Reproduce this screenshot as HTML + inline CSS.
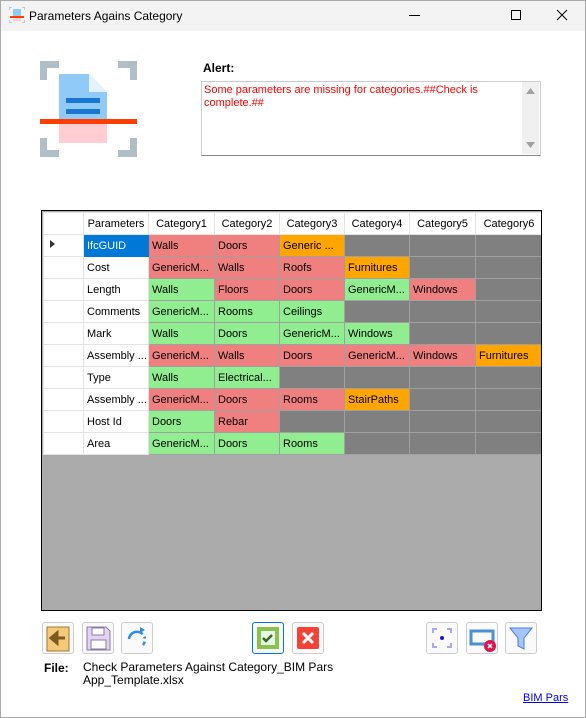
<!DOCTYPE html>
<html><head><style>
*{margin:0;padding:0;box-sizing:border-box}
body{width:586px;height:718px;background:#fff;font-family:"Liberation Sans",sans-serif;font-size:11px;position:relative;overflow:hidden}
.abs{position:absolute}
.title{left:0;top:0;width:586px;height:31px;background:#f3f3f3}
.grid{left:41px;top:210px;width:501px;height:401px;border:1px solid #000;background:#ababab;overflow:hidden}
table{border-collapse:collapse;table-layout:fixed;position:absolute;left:1px;top:1px;width:499px}
td{height:22px;border:1px solid #a0a0a0;padding:0 0 0 3px;white-space:nowrap;overflow:hidden;font-size:11px;color:#000}
.h td{background:#fff;border-color:#e3e3e3;text-align:center;padding:0}
td.rh{background:#fff;border-color:#e3e3e3}
td.p{background:#fff;border-color:#e3e3e3}
.R{background:#f08080}.G{background:#90ee90}.O{background:#ffa500}.X{background:#808080}
.btn{position:absolute;top:622px;width:32px;height:32px;border:1px solid #ccc;border-radius:3px;background:#fafafa}
</style></head><body>
<div class="abs title"></div>
<div class="abs" style="left:0;top:0;width:586px;height:718px;border:1px solid #aaa;pointer-events:none"></div>
<svg class="abs" style="left:9px;top:7px" width="16" height="16"><rect x="4" y="2" width="8" height="8" fill="#90caf9"/><rect x="1" y="9" width="14" height="2" fill="#ff3d00"/><rect x="4" y="11" width="8" height="3" fill="#ffcdd2"/><path d="M0 0h3M0 0v3M16 0h-3M16 0v3M0 16h3M0 16v-3M16 16h-3M16 16v-3" stroke="#b0bec5" stroke-width="1.5"/></svg>
<div class="abs" style="left:29px;top:9px;font-size:12px;color:#000">Parameters Agains Category</div>
<div class="abs" style="left:409px;top:15px;width:11px;height:1px;background:#000"></div>
<div class="abs" style="left:511px;top:10px;width:10px;height:10px;border:1px solid #000"></div>
<svg class="abs" style="left:556px;top:9px" width="12" height="12"><path d="M1 1L11 11M11 1L1 11" stroke="#000" stroke-width="1"/></svg>

<svg class="abs" style="left:40px;top:61px" width="97" height="96">
<path d="M0 0h19v7H7v12H0zM97 0H78v7h12v12h7zM0 96h19v-7H7V77H0zM97 96H78v-7h12V77h7z" fill="#b0bec5"/>
<path d="M19 13h30l18 18v32H19z" fill="#90caf9"/><path d="M49 13v18h18z" fill="#e3f2fd"/>
<rect x="26" y="37" width="34" height="5" fill="#1976d2"/><rect x="26" y="48" width="34" height="5" fill="#1976d2"/>
<rect x="19" y="63" width="48" height="19" fill="#ffcdd2"/><rect x="0" y="58" width="97" height="5" fill="#ff3d00"/>
</svg>
<div class="abs" style="left:203px;top:61px;font-weight:bold;font-size:12px">Alert:</div>
<div class="abs" style="left:201px;top:81px;width:340px;height:75px;border:1px solid #ccc;border-bottom-color:#888;background:#fff"></div>
<div class="abs" style="left:204px;top:84px;width:310px;color:#ff0000;line-height:13px">Some parameters are missing for categories.##Check is complete.##</div>
<div class="abs" style="left:522px;top:82px;width:17px;height:72px;background:#f0f0f0"></div>
<svg class="abs" style="left:525px;top:87px" width="11" height="66"><path d="M1 7L5.5 1L10 7z M1 55L5.5 61L10 55z" fill="#a0a0a0"/></svg>

<div class="abs grid">
<table>
<colgroup><col style="width:40px"><col style="width:65px"><col style="width:66px"><col style="width:65px"><col style="width:65px"><col style="width:65px"><col style="width:66px"><col style="width:67px"></colgroup>
<tr class="h"><td></td><td>Parameters</td><td>Category1</td><td>Category2</td><td>Category3</td><td>Category4</td><td>Category5</td><td>Category6</td></tr>
<tr><td class="rh"><svg width="8" height="10" style="margin-left:2px"><path d="M1 1L6 5L1 9z" fill="#333"/></svg></td><td style="background:#0078d7;color:#fff;border-color:#0078d7">IfcGUID</td><td class="R">Walls</td><td class="R">Doors</td><td class="O">Generic ...</td><td class="X"></td><td class="X"></td><td class="X"></td></tr>
<tr><td class="rh"></td><td class="p">Cost</td><td class="R">GenericM...</td><td class="R">Walls</td><td class="R">Roofs</td><td class="O">Furnitures</td><td class="X"></td><td class="X"></td></tr>
<tr><td class="rh"></td><td class="p">Length</td><td class="G">Walls</td><td class="R">Floors</td><td class="R">Doors</td><td class="G">GenericM...</td><td class="R">Windows</td><td class="X"></td></tr>
<tr><td class="rh"></td><td class="p">Comments</td><td class="G">GenericM...</td><td class="G">Rooms</td><td class="G">Ceilings</td><td class="X"></td><td class="X"></td><td class="X"></td></tr>
<tr><td class="rh"></td><td class="p">Mark</td><td class="G">Walls</td><td class="G">Doors</td><td class="G">GenericM...</td><td class="G">Windows</td><td class="X"></td><td class="X"></td></tr>
<tr><td class="rh"></td><td class="p">Assembly ...</td><td class="R">GenericM...</td><td class="R">Walls</td><td class="R">Doors</td><td class="R">GenericM...</td><td class="R">Windows</td><td class="O">Furnitures</td></tr>
<tr><td class="rh"></td><td class="p">Type</td><td class="G">Walls</td><td class="G">Electrical...</td><td class="X"></td><td class="X"></td><td class="X"></td><td class="X"></td></tr>
<tr><td class="rh"></td><td class="p">Assembly ...</td><td class="R">GenericM...</td><td class="R">Doors</td><td class="R">Rooms</td><td class="O">StairPaths</td><td class="X"></td><td class="X"></td></tr>
<tr><td class="rh"></td><td class="p">Host Id</td><td class="G">Doors</td><td class="R">Rebar</td><td class="X"></td><td class="X"></td><td class="X"></td><td class="X"></td></tr>
<tr><td class="rh"></td><td class="p">Area</td><td class="G">GenericM...</td><td class="G">Doors</td><td class="G">Rooms</td><td class="X"></td><td class="X"></td><td class="X"></td></tr>
</table>
</div>

<div class="btn" style="left:42px"><svg width="30" height="30"><rect x="4" y="4" width="22" height="24" fill="#f5c97a" stroke="#a07a30"/><path d="M8 15h14M8 15l6-5v10z" stroke="#7a5a20" stroke-width="3" fill="#7a5a20"/></svg></div>
<div class="btn" style="left:82px"><svg width="30" height="30"><path d="M4 4h19l4 4v19H4z" fill="#e1d5f0" stroke="#8a7aa8"/><rect x="9" y="5" width="12" height="7" fill="#fff" stroke="#8a7aa8"/><rect x="8" y="17" width="15" height="9" fill="#fff" stroke="#8a7aa8"/></svg></div>
<div class="btn" style="left:121px"><svg width="30" height="30"><path d="M7 16a8 8 0 1 1 14 6" stroke="#2a8af0" stroke-width="2.5" fill="none" stroke-dasharray="18 3 2 3"/><path d="M18 4l5 3-5 3z" fill="#2a8af0"/></svg></div>
<div class="btn" style="left:252px;border-color:#0078d7"><svg width="30" height="30"><rect x="4" y="4" width="22" height="22" fill="#8bc34a"/><rect x="8" y="8" width="14" height="14" fill="#e8f5e9"/><path d="M10 15l3 3 6-6" stroke="#33691e" stroke-width="2.5" fill="none"/></svg></div>
<div class="btn" style="left:292px"><svg width="30" height="30"><rect x="4" y="4" width="22" height="22" rx="2" fill="#f44336"/><path d="M10 10l10 10M20 10l-10 10" stroke="#fff" stroke-width="3"/></svg></div>
<div class="btn" style="left:426px"><svg width="30" height="30"><path d="M6 10V6h4M20 6h4v4M24 20v4h-4M10 24H6v-4" stroke="#a8a8ff" stroke-width="2" fill="none"/><circle cx="15" cy="15" r="2" fill="#1a1ad0"/></svg></div>
<div class="btn" style="left:466px"><svg width="30" height="30"><rect x="4" y="8" width="22" height="13" fill="none" stroke="#4a90d9" stroke-width="3"/><circle cx="23" cy="23" r="6" fill="#e0144c"/><path d="M21 21l4 4M25 21l-4 4" stroke="#fff" stroke-width="1.5"/></svg></div>
<div class="btn" style="left:505px"><svg width="30" height="30"><path d="M4 5h22L18 15v11l-6-3v-8z" fill="#a8c4ff" stroke="#4a7ae0"/></svg></div>

<div class="abs" style="left:44px;top:661px;font-weight:bold;font-size:12px">File:</div>
<div class="abs" style="left:83px;top:661px;line-height:13px;font-size:12px">Check Parameters Against Category_BIM Pars<br>App_Template.xlsx</div>
<div class="abs" style="left:523px;top:692px;color:#0000ee;text-decoration:underline">BIM Pars</div>
</body></html>
